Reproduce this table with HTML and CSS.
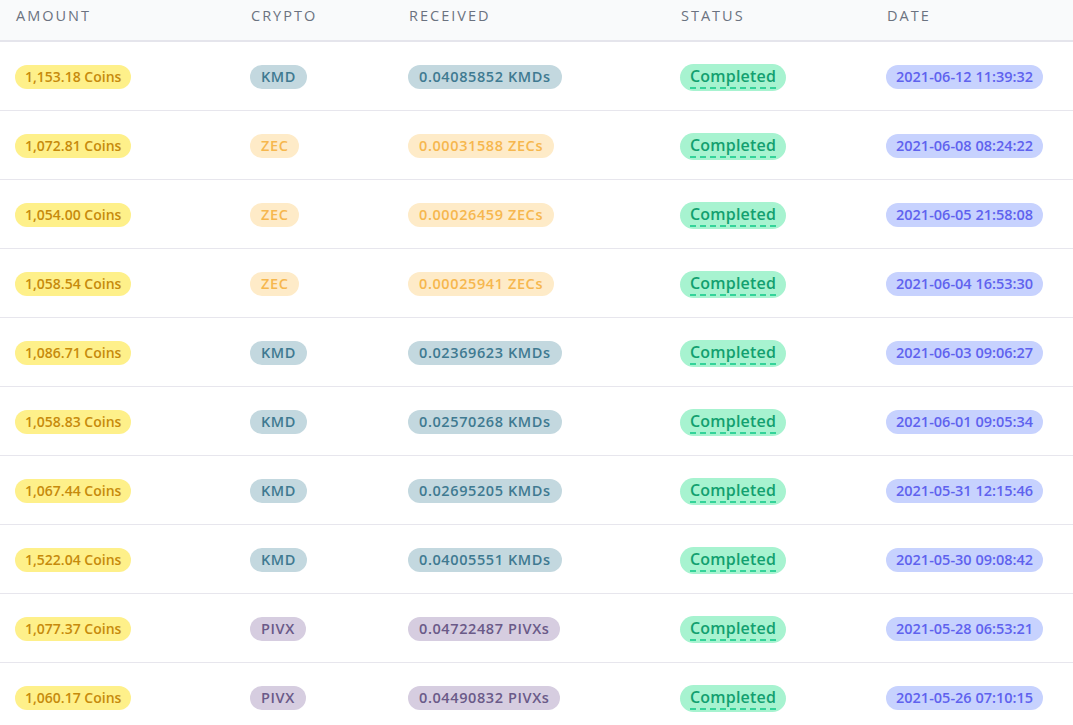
FILE: index.html
```html
<!DOCTYPE html>
<html>
<head>
<meta charset="utf-8">
<link rel="stylesheet" href="styles.css">
</head>
<body>
<div class="table">
  <div class="row head">
    <div class="cell">Amount</div>
    <div class="cell">Crypto</div>
    <div class="cell">Received</div>
    <div class="cell">Status</div>
    <div class="cell">Date</div>
  </div>
  <div class="row">
    <div class="cell"><span class="badge amount">1,153.18 Coins</span></div>
    <div class="cell"><span class="badge kmd">KMD</span></div>
    <div class="cell"><span class="badge kmd">0.04085852 KMDs</span></div>
    <div class="cell"><span class="badge status"><span class="dash">Completed</span></span></div>
    <div class="cell"><span class="badge date">2021-06-12 11:39:32</span></div>
  </div>
  <div class="row">
    <div class="cell"><span class="badge amount">1,072.81 Coins</span></div>
    <div class="cell"><span class="badge zec">ZEC</span></div>
    <div class="cell"><span class="badge zec">0.00031588 ZECs</span></div>
    <div class="cell"><span class="badge status"><span class="dash">Completed</span></span></div>
    <div class="cell"><span class="badge date">2021-06-08 08:24:22</span></div>
  </div>
  <div class="row">
    <div class="cell"><span class="badge amount">1,054.00 Coins</span></div>
    <div class="cell"><span class="badge zec">ZEC</span></div>
    <div class="cell"><span class="badge zec">0.00026459 ZECs</span></div>
    <div class="cell"><span class="badge status"><span class="dash">Completed</span></span></div>
    <div class="cell"><span class="badge date">2021-06-05 21:58:08</span></div>
  </div>
  <div class="row">
    <div class="cell"><span class="badge amount">1,058.54 Coins</span></div>
    <div class="cell"><span class="badge zec">ZEC</span></div>
    <div class="cell"><span class="badge zec">0.00025941 ZECs</span></div>
    <div class="cell"><span class="badge status"><span class="dash">Completed</span></span></div>
    <div class="cell"><span class="badge date">2021-06-04 16:53:30</span></div>
  </div>
  <div class="row">
    <div class="cell"><span class="badge amount">1,086.71 Coins</span></div>
    <div class="cell"><span class="badge kmd">KMD</span></div>
    <div class="cell"><span class="badge kmd">0.02369623 KMDs</span></div>
    <div class="cell"><span class="badge status"><span class="dash">Completed</span></span></div>
    <div class="cell"><span class="badge date">2021-06-03 09:06:27</span></div>
  </div>
  <div class="row">
    <div class="cell"><span class="badge amount">1,058.83 Coins</span></div>
    <div class="cell"><span class="badge kmd">KMD</span></div>
    <div class="cell"><span class="badge kmd">0.02570268 KMDs</span></div>
    <div class="cell"><span class="badge status"><span class="dash">Completed</span></span></div>
    <div class="cell"><span class="badge date">2021-06-01 09:05:34</span></div>
  </div>
  <div class="row">
    <div class="cell"><span class="badge amount">1,067.44 Coins</span></div>
    <div class="cell"><span class="badge kmd">KMD</span></div>
    <div class="cell"><span class="badge kmd">0.02695205 KMDs</span></div>
    <div class="cell"><span class="badge status"><span class="dash">Completed</span></span></div>
    <div class="cell"><span class="badge date">2021-05-31 12:15:46</span></div>
  </div>
  <div class="row">
    <div class="cell"><span class="badge amount">1,522.04 Coins</span></div>
    <div class="cell"><span class="badge kmd">KMD</span></div>
    <div class="cell"><span class="badge kmd">0.04005551 KMDs</span></div>
    <div class="cell"><span class="badge status"><span class="dash">Completed</span></span></div>
    <div class="cell"><span class="badge date">2021-05-30 09:08:42</span></div>
  </div>
  <div class="row">
    <div class="cell"><span class="badge amount">1,077.37 Coins</span></div>
    <div class="cell"><span class="badge pivx">PIVX</span></div>
    <div class="cell"><span class="badge pivx">0.04722487 PIVXs</span></div>
    <div class="cell"><span class="badge status"><span class="dash">Completed</span></span></div>
    <div class="cell"><span class="badge date">2021-05-28 06:53:21</span></div>
  </div>
  <div class="row">
    <div class="cell"><span class="badge amount">1,060.17 Coins</span></div>
    <div class="cell"><span class="badge pivx">PIVX</span></div>
    <div class="cell"><span class="badge pivx">0.04490832 PIVXs</span></div>
    <div class="cell"><span class="badge status"><span class="dash">Completed</span></span></div>
    <div class="cell"><span class="badge date">2021-05-26 07:10:15</span></div>
  </div>
</div>
</body>
</html>
```
FILE: styles.css
```css
html, body {
  margin: 0;
  padding: 0;
  background: #ffffff;
  overflow: hidden;
}
body {
  font-family: "Open Sans", "Liberation Sans", sans-serif;
}
.table {
  width: 1073px;
}
.row {
  display: grid;
  grid-template-columns: 235px 158px 272px 206px 1fr;
  align-items: center;
  height: 68px;
  border-bottom: 1px solid #e7e6ed;
}
.row.head {
  height: 40px;
  align-items: start;
  background: #f9fafb;
  border-bottom: 2px solid #e5e5ec;
}
.head .cell {
  padding-top: 6px;
  padding-left: 16px;
  font-size: 14.5px;
  line-height: 20px;
  text-transform: uppercase;
  letter-spacing: 2px;
  color: #6b7280;
  font-weight: 400;
}
.cell {
  padding-left: 15px;
  display: flex;
  align-items: center;
}
.badge {
  display: inline-block;
  height: 24px;
  line-height: 24px;
  padding: 0 10px;
  border-radius: 12px;
  font-size: 14.5px;
  letter-spacing: 0;
  font-weight: 600;
  white-space: nowrap;
  margin-top: 2px;
}
.amount { background: #fef08a; color: #c68a0c; font-size: 14px; }
.kmd { background: #c3d8df; color: #3f7a91; padding: 0 11px; letter-spacing: 0.6px; }
.zec { background: #feebc8; color: #f6b74e; padding: 0 11px; letter-spacing: 0.6px; }
.pivx { background: #d6cde0; color: #6a5a88; padding: 0 11px; letter-spacing: 0.6px; }
.date { background: #c7d2fe; color: #5f62ee; }
.status {
  background: #a7f3d0;
  color: #12a06f;
  height: 27px;
  line-height: 24px;
  border-radius: 14px;
  font-size: 16px;
  letter-spacing: 0.2px;
}
.dash {
  display: inline-block;
  line-height: 21px;
  border-bottom: 2px dashed #34d399;
}
```
